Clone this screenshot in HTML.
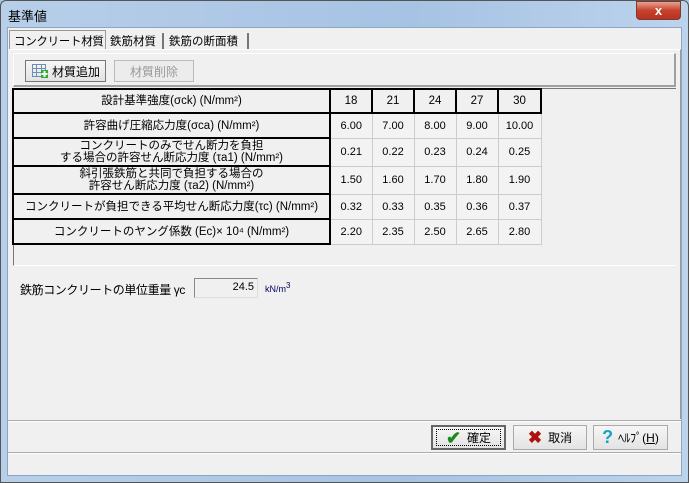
<!DOCTYPE html><html><head><meta charset="utf-8"><style>
*{box-sizing:border-box}body{margin:0;width:689px;height:483px;overflow:hidden;font-family:"Liberation Sans","Noto Sans CJK JP",sans-serif;font-size:12px;color:#000;background:#a9c5e4}
.a{position:absolute;white-space:nowrap}
.win{left:0;top:0;width:689px;height:483px;border:1px solid #555;border-radius:6px 6px 0 0;background:linear-gradient(90deg,#b7cfe9,#a6c3e3 60%,#bcd3ec)}
.client{left:7px;top:27px;width:675px;height:449px;background:#f0f0f0;border:1px solid #8ea6c4}
.btn{border:1px solid #8a8a8a;background:linear-gradient(#f6f6f6,#e3e3e3);display:flex;align-items:center;justify-content:center;font-size:12px}
table{table-layout:fixed}
td{border:2px solid #000;text-align:center;font-size:11.5px;padding:0;line-height:12px;white-space:nowrap;overflow:hidden}
td.n{border:1px solid #ccc;border-width:0 1px 1px 0;background:#f3f3f3;font-size:11px}
</style></head><body>
<div class="a win"></div>
<div class="a" style="left:8px;top:6px;font-size:13px">基準値</div>
<div class="a" style="left:636px;top:1px;width:45px;height:19px;border:1px solid #7a3a2e;border-radius:0 0 4px 4px;background:linear-gradient(#e9a190,#c7412c 50%,#b83320);color:#fff;font-weight:bold;text-align:center;line-height:17px;font-size:13px">x</div>
<div class="a client"></div>
<div class="a" style="left:9px;top:30px;width:97px;height:20px;border:1px solid #999;border-bottom:none;background:#f0f0f0;padding:2px 0 0 4px;font-size:11.5px;letter-spacing:-0.3px">コンクリート材質</div>
<div class="a" style="left:107px;top:33px;width:57px;height:16px;border-right:2px solid #777;padding-left:3px;font-size:11.5px">鉄筋材質</div>
<div class="a" style="left:166px;top:33px;width:83px;height:16px;border-right:2px solid #777;padding-left:3px;font-size:11.5px">鉄筋の断面積</div>
<div class="a" style="left:8px;top:49px;width:673px;height:370px;border-top:1px solid #fff;border-right:1px solid #999"></div>
<div class="a" style="left:13px;top:53px;width:663px;height:34px;border:1px solid #fff;border-right:2px solid #a0a0a0;border-bottom:2px solid #a0a0a0"></div>
<div class="a btn" style="left:25px;top:60px;width:81px;height:22px;border-color:#777"><svg width="18" height="16" style="margin-right:3px"><g stroke="#6b8fb8" fill="none"><rect x="1.5" y="1.5" width="13" height="12"/><path d="M1 5.5h14M1 9.5h14M5.5 1v13M10.5 1v13"/></g><rect x="10" y="7" width="7" height="8" fill="#3a3"/><path d="M13.5 8v6M10.5 11h6" stroke="#fff" stroke-width="2"/></svg>材質追加</div>
<div class="a btn" style="left:114px;top:60px;width:80px;height:22px;color:#999;border-color:#bbb;background:#ececec">材質削除</div>
<div class="a" style="left:13px;top:88px;width:663px;height:178px;border:1px solid #777;border-right:none;border-bottom:1px solid #fff;background:#f0f0f0"></div>
<table class="a" style="left:12px;top:88px;border-collapse:collapse;width:528px" cellspacing="0">
<colgroup><col style="width:317px"><col style="width:42px"><col style="width:42px"><col style="width:42px"><col style="width:42px"><col style="width:43px"></colgroup>
<tr style="height:24px"><td>設計基準強度(σck) (N/mm²)</td><td>18</td><td>21</td><td>24</td><td>27</td><td>30</td></tr>
<tr style="height:25px"><td>許容曲げ圧縮応力度(σca) (N/mm²)</td><td class="n">6.00</td><td class="n">7.00</td><td class="n">8.00</td><td class="n">9.00</td><td class="n">10.00</td></tr>
<tr style="height:28px"><td>コンクリートのみでせん断力を負担<br>する場合の許容せん断応力度 (τa1) (N/mm²)</td><td class="n">0.21</td><td class="n">0.22</td><td class="n">0.23</td><td class="n">0.24</td><td class="n">0.25</td></tr>
<tr style="height:28px"><td>斜引張鉄筋と共同で負担する場合の<br>許容せん断応力度 (τa2) (N/mm²)</td><td class="n">1.50</td><td class="n">1.60</td><td class="n">1.70</td><td class="n">1.80</td><td class="n">1.90</td></tr>
<tr style="height:25px"><td>コンクリートが負担できる平均せん断応力度(τc) (N/mm²)</td><td class="n">0.32</td><td class="n">0.33</td><td class="n">0.35</td><td class="n">0.36</td><td class="n">0.37</td></tr>
<tr style="height:25px"><td>コンクリートのヤング係数 (Ec)× 10⁴ (N/mm²)</td><td class="n">2.20</td><td class="n">2.35</td><td class="n">2.50</td><td class="n">2.65</td><td class="n">2.80</td></tr>
</table>
<div class="a" style="left:20px;top:281px;font-size:12px;letter-spacing:-0.4px">鉄筋コンクリートの単位重量 γc</div>
<div class="a" style="left:194px;top:278px;width:64px;height:20px;border:1px solid #888;border-right-color:#ddd;border-bottom-color:#ddd;background:#f0f0f0;text-align:right;padding:2px 3px 0 0;font-size:11px">24.5</div>
<div class="a" style="left:265px;top:281px;font-size:9px;color:#006">kN/m<sup style="font-size:8px">3</sup></div>
<div class="a" style="left:8px;top:420px;width:673px;border-top:1px solid #aaa;border-bottom:1px solid #fff"></div>
<div class="a" style="left:8px;top:452px;width:673px;border-top:1px solid #aaa;border-bottom:1px solid #fff"></div>
<div class="a btn" style="left:431px;top:425px;width:75px;height:25px;border:2px solid #666"><div style="border:1px dotted #000;width:65px;height:17px;display:flex;align-items:center;justify-content:center"><span style="color:#1a8a1a;font-size:18px;font-weight:bold;margin-right:6px;line-height:16px">✔</span>確定</div></div>
<div class="a btn" style="left:513px;top:425px;width:74px;height:25px;border-color:#aaa"><span style="color:#b01010;font-size:17px;font-weight:bold;margin-right:6px">✖</span>取消</div>
<div class="a btn" style="left:593px;top:425px;width:75px;height:25px;border-color:#aaa"><span style="color:#19a0c8;font-size:18px;font-weight:bold;margin-right:5px">?</span>ﾍﾙﾌﾟ(<u>H</u>)</div>
</body></html>
